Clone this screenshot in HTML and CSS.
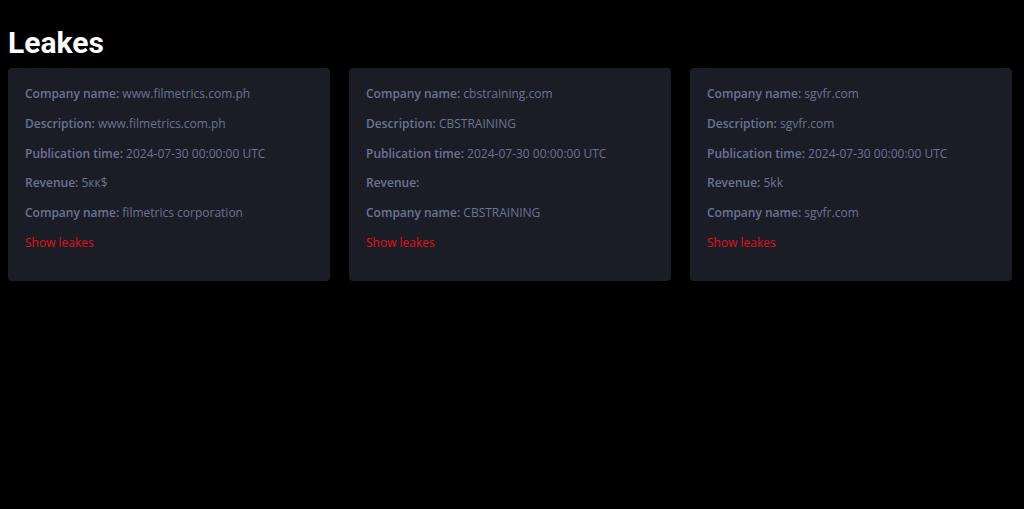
FILE: index.html
```html
<!DOCTYPE html>
<html lang="en">
<head>
    <meta charset="UTF-8">
    <meta name="viewport" content="width=device-width, initial-scale=1.0">
    <title>Leakes</title>
    <link rel="stylesheet" href="styles.css">
</head>
<body>

<h1 class="page-title">Leakes</h1>

<div class="leak-list">
    <div class="leak-card">
        <p><b>Company name:</b> www.filmetrics.com.ph</p>
        <p><b>Description:</b> www.filmetrics.com.ph</p>
        <p><b>Publication time:</b> 2024-07-30 00:00:00 UTC</p>
        <p><b>Revenue:</b> 5кк$</p>
        <p><b>Company name:</b> filmetrics corporation</p>
        <a class="show-link" href="#">Show leakes</a>
    </div>

    <div class="leak-card">
        <p><b>Company name:</b> cbstraining.com</p>
        <p><b>Description:</b> CBSTRAINING</p>
        <p><b>Publication time:</b> 2024-07-30 00:00:00 UTC</p>
        <p><b>Revenue:</b> </p>
        <p><b>Company name:</b> CBSTRAINING</p>
        <a class="show-link" href="#">Show leakes</a>
    </div>

    <div class="leak-card">
        <p><b>Company name:</b> sgvfr.com</p>
        <p><b>Description:</b> sgvfr.com</p>
        <p><b>Publication time:</b> 2024-07-30 00:00:00 UTC</p>
        <p><b>Revenue:</b> 5kk</p>
        <p><b>Company name:</b> sgvfr.com</p>
        <a class="show-link" href="#">Show leakes</a>
    </div>
</div>

</body>
</html>
```

FILE: styles.css
```css
body {
    margin: 8px;
    background-color: #000;
    font-family: "Open Sans", "Noto Sans", sans-serif;
}
.page-title {
    font-family: Roboto, "Liberation Sans", sans-serif;
    font-weight: 700;
    font-size: 30px;
    line-height: 36px;
    color: #fff;
    margin: 17px 0 7px;
}
.leak-list {
    display: grid;
    grid-template-columns: repeat(3, 1fr);
    gap: 19px;
    margin-right: 4px;
}
.leak-card {
    background-color: #1b1d26;
    border-radius: 4px;
    padding: 16px 17px 18.5px;
}
.leak-card p {
    margin: 0 0 9.8px;
    font-size: 12px;
    line-height: 20px;
    color: #6b7391;
}
.leak-card b {
    font-weight: 600;
}
.show-link {
    display: block;
    font-size: 12px;
    line-height: 20px;
    margin-bottom: 10px;
    color: #e0121b;
    text-decoration: none;
}
```
